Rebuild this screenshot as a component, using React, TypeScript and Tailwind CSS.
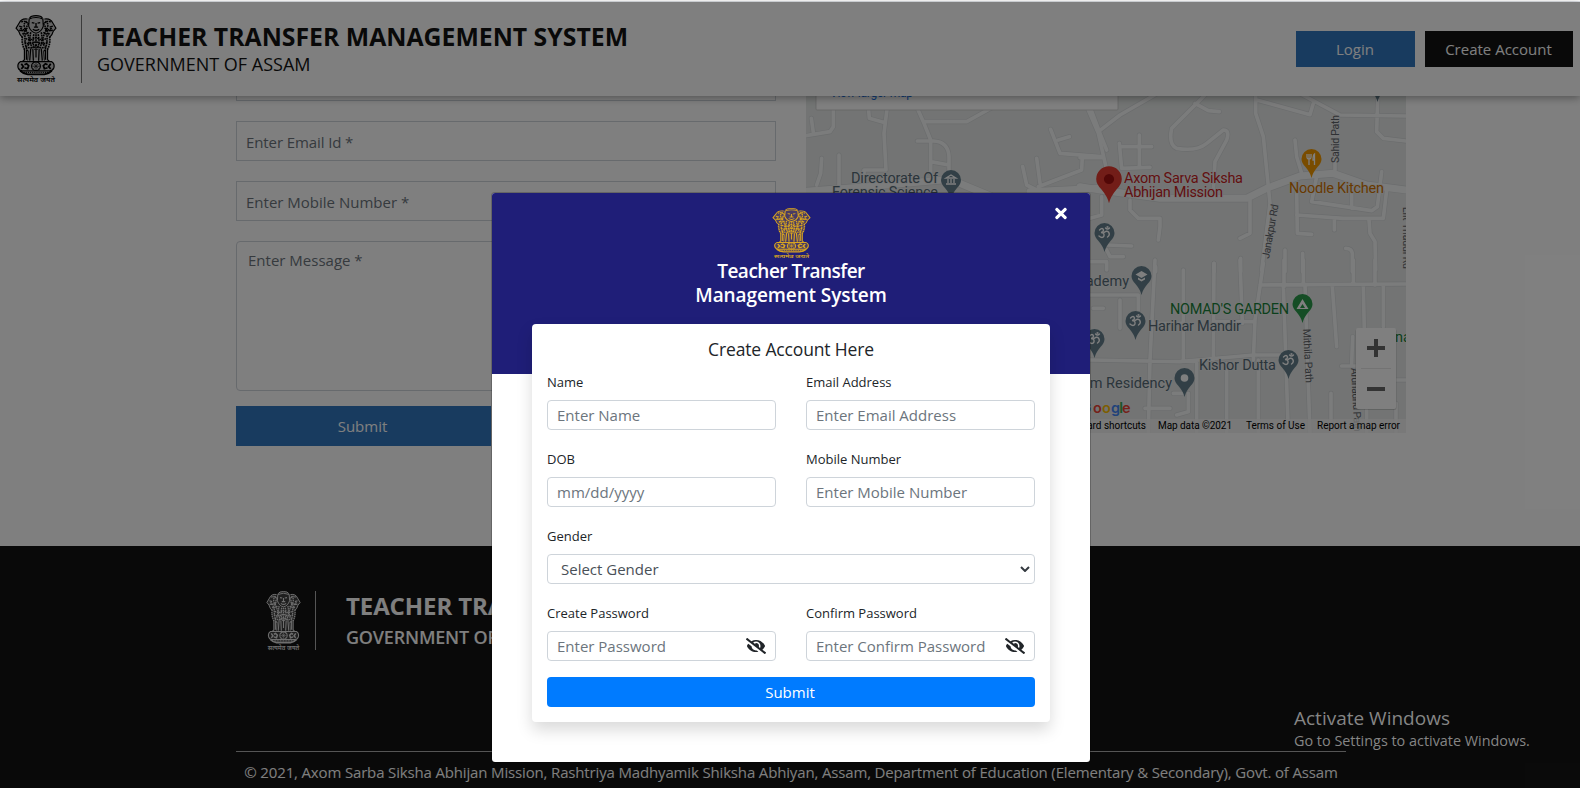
import React from "react";
import { FaEyeSlash, FaTimes } from "react-icons/fa";

function Emblem({ className }: { className: string }) {
  return (
    <svg viewBox="0 0 40 68" preserveAspectRatio="none" className={className} fill="none" stroke="currentColor">
      <path
        d="M14 2Q20 -1 26 2L28 4Q34 3 36 8L39 13L36 17L33 22Q34 28 31 34L31 45H9V34Q6 28 7 22L4 17L1 13L4 8Q6 3 12 4ZM5 46H35Q38 49 36 55L31 58.500H9L4 55Q2 49 5 46Z"
        fill="currentColor"
        fillOpacity=".22"
        stroke="none"
      />
      <g strokeWidth="1.100">
        <path d="M14 3Q15 .6 20 .6T26 3M13.500 4L13 11Q15 17 20 18Q25 17 27 11L26.500 4Q20 1 13.500 4Z" />
        <path d="M12 4Q6 3 4 8L1 13L3.500 16Q4.500 20 7 22M28 4Q34 3 36 8L39 13L36.500 16Q35.500 20 33 22" />
        <path d="M16 7.500L18.500 8M24 7.500L21.500 8M20 8V12M17 14Q20 16.500 23 14M18 12H22" strokeWidth="1.300" />
        <path d="M4 11L7 12M36 11L33 12M4 15L8 15.500M36 15L32 15.500" strokeWidth="1.300" />
      </g>
      <g strokeWidth="1.500" strokeDasharray="1.700 .7">
        <path d="M11 6Q8 8 9 12T8 20M29 6Q32 8 31 12T32 20M13 8Q9 14 12 19T12 31M27 8Q31 14 28 19T28 31" />
        <path d="M6 7Q9 5 12 8M34 7Q31 5 28 8M7 18Q10 20 13 17M33 18Q30 20 27 17M5 13Q9 16 12 13M35 13Q31 16 28 13" />
        <path d="M7 21Q6 28 9 34M33 21Q34 28 31 34M9.500 20Q9 28 12 36M30.500 20Q31 28 28 36" />
        <path d="M15 17Q13 26 17 34M25 17Q27 26 23 34M18 19Q16 27 19 34M22 19Q24 27 21 34M20 19V34" />
        <path d="M10 23Q15 26 20 22Q25 26 30 23M9 27Q15 30 20 26Q25 30 31 27M10 31Q15 34 20 30Q25 34 30 31" />
      </g>
      <g strokeWidth="1.200">
        <path d="M9 33V44L7 46M11 34V44M15 33L14 45M17 34L17.500 45M20 33V42M23 34L22.500 45M25 33L26 45M29 34V44M31 33V44L33 46" />
        <path d="M13 35L12 45M27 35L28 45" strokeWidth=".7" />
        <path d="M5 46H35Q38 48 37 52Q36 55 33 55H7Q4 55 3 52Q2 48 5 46Z" />
        <circle cx="20" cy="50.500" r="4.200" />
        <path d="M20 47V54M16.500 50.500H23.500M17.500 48L22.500 53M22.500 48L17.500 53" strokeWidth=".6" />
        <path d="M6 48L8 51L6 53M9 49L11 48L13 50L12 53L9 52M34 48L32 51L34 53M31 49L29 48L27 50L28 53L31 52" strokeWidth="1.700" />
        <path d="M5 55Q8 58 12 58.500H28Q32 58 35 55" strokeWidth="1.900" />
        <path d="M7 56.500H33" strokeDasharray="1 .8" />
      </g>
      <text x="2" y="66.500" fill="currentColor" stroke="none" fontSize="6.500" textLength="36" lengthAdjust="spacingAndGlyphs" fontFamily="'Noto Sans Devanagari','Noto Sans',sans-serif" fontWeight="600">
        सत्यमेव जयते
      </text>
    </svg>
  );
}

const roadsWest =
  "M0 140L90 125L100 110V50M34 85L40 128M205 50L208 85L255 98M262 50L252 130L258 240H192V290M350 50L370 95L500 95L590 45M370 95L392 150V250M352 153H400Q445 155 447 200V250M392 215L447 225M65 205L62 250L50 285M117 195V290M752 118L780 190L905 200M775 150L808 140M847 200L845 240L715 290M668 230L680 285L710 300M710 205L720 280";
const roadsNorth =
  "M25 60L55 130L80 240M55 125L120 75L250 0M0 203H70M380 10L345 45L275 115Q265 165 290 175Q350 185 380 160L430 120Q450 120 440 150L405 215L400 300M345 40L385 62L418 65M118 160L125 235L210 232M120 170H215M178 135V230M527 15V70L550 140L565 290L570 340L545 540M530 30L690 74L700 40M640 0L780 75L978 78M893 30L890 125L910 145L978 153M645 150L650 200L665 250M710 260L695 335L875 362L892 350L905 245M815 290V355M650 300L652 430L695 433M650 375L790 385H910L920 300M763 390V420M867 390L870 430L885 455L887 540M765 185V240M510 330V430L480 445M150 330V360L175 385H240V410L235 450M65 320V375L30 385M80 465L155 468M80 480L90 500H130M30 515H80V540M227 530V545M402 520V545M482 505V545M615 480V545M668 490V545M797 475Q815 475 817 490V545";
const roadsSouth =
  "M225 0L210 300L205 520M310 30V300M402 10L400 300M480 0L487 190M550 10L540 80L525 180L520 300M540 75L978 72M612 0V80M670 0V70M610 75L625 520M675 75L690 520M757 80L770 260M820 0V70M850 80L855 300M910 75V200M885 0V75M30 300L300 305L520 285H600M30 105H175V150M120 120V205M40 145H70M350 310V520M440 310V520M535 300V520M195 445H270M290 465L325 455V400M280 400H310M753 400V520M818 230L815 310M785 318H830M948 360H978M948 430V520M860 450V520M225 190H310M400 185H520";

function Pin({ x, y, s = 1, color, children }: { x: number; y: number; s?: number; color: string; children?: React.ReactNode }) {
  return (
    <g transform={`translate(${x} ${y}) scale(${s})`}>
      <path d="M0 19Q-1 14 -6 8Q-10 4 -10 0A10 10 0 0 1 10 0Q10 4 6 8Q1 14 0 19Z" fill={color} />
      {children}
    </g>
  );
}

const Om = () => (
  <g fill="none" stroke="#fff" strokeWidth="1.400" strokeLinecap="round">
    <path d="M-5 -3Q-2 -6 -1 -3Q-1 -1 -3.500 -.5Q0 -.5 -.5 3Q-2 6 -5.500 3M-1 0Q2 -3 4 -1Q6 2 3 4M1 -5Q3 -3 5 -5" />
    <circle cx="3" cy="-6" r=".4" />
  </g>
);

function RoadMap() {
  const slate = "#647f8c";
  const ink = "#566a77";
  return (
    <svg viewBox="806 96 600 337" className="block h-[337px] w-[600px]" fontFamily="Roboto, sans-serif">
      <rect x="806" y="96" width="600" height="337" fill="#e6e9e8" />
      {[
        { s: "#d6d9db", extra: 3 },
        { s: "#f7f8f8", extra: -1 },
      ].map((layer) => (
        <g key={layer.s} fill="none" stroke={layer.s} strokeLinecap="round" strokeLinejoin="round">
          <g transform="translate(800 90) scale(.33333)" strokeWidth={12 + layer.extra}>
            <path d={roadsWest} />
            <path d="M870 50L900 130L920 180" />
            <path d="M0 305L200 290L450 268L600 330M690 305L900 295" strokeWidth={22 + layer.extra} />
          </g>
          <g transform="translate(1080 90) scale(.33333)" strokeWidth={12 + layer.extra}>
            <path d={roadsNorth} />
            <path d="M0 290L60 300L240 325H500L560 295L660 258L760 250L860 285L980 300" strokeWidth={22 + layer.extra} />
          </g>
          <g transform="translate(1080 260) scale(.33333)" strokeWidth={12 + layer.extra}>
            <path d={roadsSouth} />
          </g>
        </g>
      ))}

      <g fill="#5f6368" fontSize="10.500">
        <text transform="translate(1338.500 163) rotate(-90)" textLength="48">Sahid Path</text>
        <text transform="translate(1269 259) rotate(-80)" textLength="55">Janakpur Rd</text>
        <text transform="translate(1303 329) rotate(87)" textLength="54">Mithila Path</text>
        <text transform="translate(1351 368) rotate(87)" textLength="64">Arunaund Path</text>
        <text transform="translate(1403 207) rotate(90)" textLength="62">Lilt Thaddi Rd</text>
      </g>

      <path d="M816 90H1118V109Q1118 110 1117 110H817Q816 110 816 109Z" fill="#fff" stroke="#c8c8c8" strokeWidth=".8" />
      <text x="830" y="97" fontSize="12" fill="#1a73e8" textLength="83">View larger map</text>

      <g fontSize="14.500" stroke="#eceeee" strokeWidth="1.500" paintOrder="stroke" strokeLinejoin="round">
        <g fill={ink}>
          <text x="851" y="183" textLength="87">Directorate Of</text>
          <text x="832" y="197" textLength="106">Forensic Science</text>
          <text x="1129" y="286" textAnchor="end">Academy</text>
          <text x="1148" y="331" textLength="93">Harihar Mandir</text>
          <text x="1199" y="370" textLength="77">Kishor Dutta</text>
          <text x="1172" y="388" textAnchor="end">Prim Residency</text>
        </g>
        <g fill="#c5221f">
          <text x="1124" y="183" textLength="119">Axom Sarva Siksha</text>
          <text x="1124" y="197" textLength="99">Abhijan Mission</text>
        </g>
        <text x="1289" y="193" textLength="95" fill="#d07300">Noodle Kitchen</text>
        <text x="1170" y="314" textLength="119" fill="#188038">NOMAD'S GARDEN</text>
        <text x="1395" y="342" fill="#188038">nadi</text>
      </g>

      <Pin x={951} y={180} color={slate}>
        <path d="M-5 -2L0 -5L5 -2ZM-5 4H5M-3 -1V3M0 -1V3M3 -1V3" stroke="#fff" fill="none" strokeWidth="1.300" />
      </Pin>
      <Pin x={1109} y={179} s={1.280} color="#e53b30">
        <circle r="4" fill="#a50e0e" />
      </Pin>
      <Pin x={1311.500} y={159} color="#f29900">
        <path d="M-4.500 -5V-2Q-4.500 0 -2.500 0V6M-2.500 -5V0M-.5 -5V-2Q-.5 0 -2.500 0M3 6V-5Q1.500 -4 1.500 1H3" stroke="#fff" fill="none" strokeWidth="1.300" />
      </Pin>
      <Pin x={1104.500} y={233} color={slate}><Om /></Pin>
      <Pin x={1141.500} y={276} color={slate}>
        <path d="M-6 -1.500L0 -5L6 -1.500L0 2ZM-3.500 1.500L0 3.500L3.500 1.500V3.500L0 5.500L-3.500 3.500Z" fill="#fff" />
      </Pin>
      <Pin x={1135.500} y={321} color={slate}><Om /></Pin>
      <Pin x={1094.500} y={339} color={slate}><Om /></Pin>
      <Pin x={1302.500} y={304} color="#2a9a4b">
        <path d="M0 -5L6 5H-6ZM0 0L-2.500 4H2.500Z" fill="#fff" fillRule="evenodd" />
      </Pin>
      <Pin x={1288.500} y={360} color={slate}><Om /></Pin>
      <Pin x={1184.500} y={378} color={slate}><circle r="3.800" fill="#fff" /></Pin>
      <Pin x={1377.500} y={83} color={slate} />

      <text y="413" fontFamily="Inter, sans-serif" fontWeight="600" fontSize="14.500">
        <tspan x="1080.500" fill="#4285f4">G</tspan>
        <tspan x="1093" fill="#ea4335">o</tspan>
        <tspan x="1102" fill="#fbbc05">o</tspan>
        <tspan x="1111" fill="#4285f4">g</tspan>
        <tspan x="1119.300" fill="#34a853">l</tspan>
        <tspan x="1122" fill="#ea4335">e</tspan>
      </text>

      <rect x="1060" y="419" width="346" height="14" fill="#f5f5f5" fillOpacity=".75" />
      <g fill="#000" fontSize="10">
        <text x="1060" y="429" textLength="86">Keyboard shortcuts</text>
        <text x="1158" y="429" textLength="74">Map data ©2021</text>
        <text x="1246" y="429" textLength="59">Terms of Use</text>
        <text x="1317" y="429" textLength="83">Report a map error</text>
      </g>

      <rect x="1355.500" y="329" width="41" height="81" rx="2" fill="#000" fillOpacity=".15" />
      <rect x="1356" y="328" width="40" height="81" rx="2" fill="#fff" />
      <path d="M1361 368.500H1391" stroke="#e6e6e6" />
      <path d="M1367 348H1385M1376 339V357M1367 389H1385" stroke="#666" strokeWidth="4" />
    </svg>
  );
}

function Field({ label, placeholder, eye }: { label: string; placeholder: string; eye?: boolean }) {
  return (
    <div className="w-[229px]">
      <label className="block h-[30px] pt-[3px] text-[13px] leading-[19px] text-[#212529]">{label}</label>
      <div className="flex h-[30px] items-center justify-between rounded-[4px] border border-[#ced4da] pl-[9px] pr-[9px] text-[15px] text-[#6c757d]">
        <span className="whitespace-nowrap">{placeholder}</span>
        {eye && <FaEyeSlash className="h-[16px] w-[20px] text-[#212529]" />}
      </div>
    </div>
  );
}

function Header() {
  return (
    <header className="relative z-10 flex h-[94px] items-center bg-white pl-[15px] pr-[7px] shadow-[0_2px_8px_rgba(0,0,0,0.35)]">
      <Emblem className="h-[69px] w-[42px] text-black" />
      <div className="ml-[24px] h-[68px] w-px bg-[#777]" />
      <div className="ml-[15px] flex-1 text-[#131313]">
        <div className="h-[33px] whitespace-nowrap text-[24.8px] font-bold leading-[31px]">TEACHER TRANSFER MANAGEMENT SYSTEM</div>
        <div className="h-[24px] whitespace-nowrap text-[18px] leading-[20px]">GOVERNMENT OF ASSAM</div>
      </div>
      <div className="flex gap-[10px] text-[15px] font-medium text-white">
        <div className="flex h-[36px] w-[119px] items-center justify-center bg-[#3177bf] pr-px">Login</div>
        <div className="flex h-[36px] w-[148px] items-center justify-center bg-[#131313] pr-px">Create Account</div>
      </div>
    </header>
  );
}

function Contact() {
  return (
    <section className="flex h-[450px] gap-[30px] bg-white pl-[236px] text-[15px] text-[#6c757d]">
      <div className="flex w-[540px] flex-col">
        <div className="h-[5px] border-x border-b border-[#ced4da]" />
        <div className="mt-[20px] flex h-[40px] items-center border border-[#ced4da] pl-[9px] pt-[2px] tracking-[-0.1px]">Enter Email Id *</div>
        <div className="mt-[20px] flex h-[40px] items-center border border-[#ced4da] pl-[9px] pt-[2px]">Enter Mobile Number *</div>
        <div className="mt-[20px] h-[150px] rounded-[4px] border border-[#ced4da] pl-[11px] pt-[7px]">Enter Message *</div>
        <div className="mt-[15px] flex h-[40px] w-[255px] items-center justify-center bg-[#3177bf] pr-[2px] font-medium text-white">Submit</div>
      </div>
      <RoadMap />
    </section>
  );
}

function Footer() {
  return (
    <footer className="h-[242px] bg-[#131313] pl-[236px] text-white">
      <div className="flex h-[206px] w-[1110px] items-start border-b border-[#aaa] pl-[30px] pt-[45px]">
        <Emblem className="h-[60px] w-[35px] text-[#dddddd]" />
        <div className="ml-[14px] h-[59px] w-px bg-[#aaa]" />
        <div className="ml-[30px]">
          <div className="h-[33px] text-[24px] font-bold leading-[29px] tracking-[-0.1px]">TEACHER TRANSFER MANAGEMENT SYSTEM</div>
          <div className="text-[18px] font-semibold leading-[26px] tracking-[-0.2px]">GOVERNMENT OF ASSAM</div>
        </div>
      </div>
      <div className="w-[1110px] whitespace-nowrap pt-[9px] text-center text-[15px] leading-[22px] tracking-[-0.155px]">
        © 2021, Axom Sarba Siksha Abhijan Mission, Rashtriya Madhyamik Shiksha Abhiyan, Assam, Department of Education (Elementary &amp; Secondary), Govt. of Assam
      </div>
    </footer>
  );
}

function AccountModal() {
  return (
    <div className="relative h-[571px] w-[600px] overflow-hidden rounded-[4px] border border-black/20 bg-white bg-clip-padding">
      <div className="flex h-[181px] flex-col items-center bg-[#1f1e78] pt-[15px] text-white">
        <Emblem className="h-[51px] w-[39px] text-[#d9a520]" />
        <div className="text-center text-[19px] font-semibold leading-[24px]">
          <div className="tracking-[-0.5px]">Teacher Transfer</div>
          <div className="tracking-[-0.1px]">Management System</div>
        </div>
        <FaTimes className="absolute right-[22px] top-[12px] h-[17px] w-[14px]" />
      </div>
      <div className="mx-auto -mt-[50px] flex h-[398px] w-[518px] flex-col rounded-[4px] bg-white px-[15px] shadow-[0_8px_16px_rgba(0,0,0,0.15)]">
        <h2 className="h-[46px] pt-[13px] text-center text-[17.5px] font-medium leading-[24px] tracking-[-0.15px] text-[#212529]">Create Account Here</h2>
        <div className="grid grid-cols-[229px_229px] gap-x-[30px] gap-y-[17px]">
          <Field label="Name" placeholder="Enter Name" />
          <Field label="Email Address" placeholder="Enter Email Address" />
          <Field label="DOB" placeholder="mm/dd/yyyy" />
          <Field label="Mobile Number" placeholder="Enter Mobile Number" />
          <div className="col-span-2">
            <label className="block h-[30px] pt-[3px] text-[13px] leading-[19px] text-[#212529]">Gender</label>
            <div className="flex h-[30px] items-center justify-between rounded-[4px] border border-[#ced4da] pl-[13px] pr-[4px] text-[15px] text-[#495057]">
              <span>Select Gender</span>
              <svg viewBox="0 0 10 6" className="h-[6px] w-[10px]" fill="none" stroke="#343a40" strokeWidth="2">
                <path d="M1 1L5 5L9 1" />
              </svg>
            </div>
          </div>
          <Field label="Create Password" placeholder="Enter Password" eye />
          <Field label="Confirm Password" placeholder="Enter Confirm Password" eye />
        </div>
        <div className="mt-[16px] flex h-[30px] items-center justify-center rounded-[4px] bg-[#007bff] pr-[2px] text-[15px] font-medium text-white">Submit</div>
      </div>
    </div>
  );
}

export default function App() {
  return (
    <div className="relative h-[788px] w-[1580px] overflow-hidden bg-white font-['Open_Sans',sans-serif]">
      <div className="h-[2px] border-b border-[#dee1e6] bg-white" />
      <Header />
      <Contact />
      <Footer />
      <div className="absolute inset-x-0 bottom-0 top-[2px] z-20 bg-black/50" />
      <div className="absolute left-[491px] top-[192px] z-30">
        <AccountModal />
      </div>
      <div className="absolute left-[1294px] top-[705px] z-40 text-[#858585]">
        <div className="whitespace-nowrap text-[19px] leading-[26px]">Activate Windows</div>
        <div className="whitespace-nowrap text-[14.4px] leading-[20px]">Go to Settings to activate Windows.</div>
      </div>
    </div>
  );
}
